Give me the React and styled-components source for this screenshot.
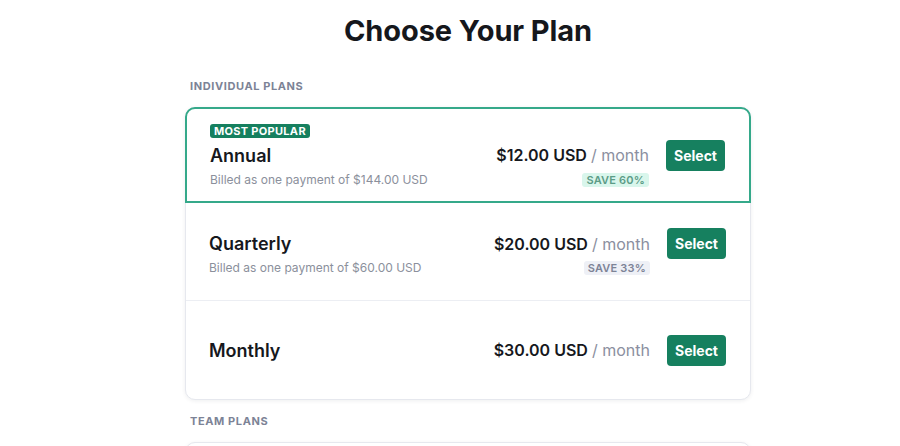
import styled, { createGlobalStyle } from "styled-components";

const GlobalStyle = createGlobalStyle`
  html, body {
    margin: 0;
    padding: 0;
    background: #ffffff;
    font-family: Inter, "Noto Sans", "Liberation Sans", sans-serif;
    color: #16181d;
  }
  * {
    box-sizing: border-box;
  }
`;

const StyledPage = styled.div`
  padding: 14px 0 40px 36px;
  display: flex;
  flex-direction: column;
  align-items: center;
`;

const StyledContent = styled.main`
  width: 566px;
  display: flex;
  flex-direction: column;
`;

const StyledTitle = styled.h1`
  margin: 0 0 31px;
  font-size: 29px;
  line-height: 34px;
  font-weight: 700;
  text-align: center;
  letter-spacing: -0.1px;
  color: #15171c;
`;

const StyledSectionLabel = styled.h2`
  margin: 0 0 14px 5px;
  font-size: 11px;
  line-height: 14px;
  font-weight: 700;
  letter-spacing: 0.6px;
  text-transform: uppercase;
  color: #7c8396;
`;

const StyledCard = styled.section`
  border: 1px solid #e6e8ee;
  border-radius: 10px;
  background: #ffffff;
  box-shadow: 0 1px 4px rgba(20, 24, 40, 0.07);
  margin-bottom: 14px;
`;

const StyledRow = styled.div`
  height: ${(p) => (p.$highlighted ? "96px" : "98px")};
  margin: ${(p) => (p.$highlighted ? "-1px -1px 0" : "0")};
  padding: 0 24px 0 ${(p) => (p.$highlighted ? "23px" : "23px")};
  display: flex;
  flex-direction: column;
  justify-content: center;
  border: ${(p) => (p.$highlighted ? "2px solid #35a98a" : "none")};
  border-bottom: ${(p) =>
    p.$highlighted ? "2px solid #35a98a" : p.$last ? "none" : "1px solid #eceef3"};
  border-radius: ${(p) => (p.$highlighted ? "10px 10px 0 0" : "0")};
`;

const StyledPopular = styled.span`
  align-self: flex-start;
  margin-bottom: 2px;
  padding: 0 4px;
  height: 14px;
  line-height: 14px;
  font-size: 11px;
  font-weight: 700;
  letter-spacing: 0.3px;
  color: #ffffff;
  background: #16805f;
  border-radius: 3px;
`;

const StyledLine = styled.div`
  display: flex;
  align-items: center;
  justify-content: space-between;
  min-height: ${(p) => (p.$main ? "31px" : "14px")};
  margin-top: ${(p) => (p.$main ? "0" : "2px")};
`;

const StyledPlanName = styled.span`
  font-size: 18px;
  font-weight: 600;
  color: #16181d;
`;

const StyledBilled = styled.span`
  font-size: 12px;
  line-height: 14px;
  color: #8b909c;
`;

const StyledPriceGroup = styled.div`
  display: flex;
  align-items: center;
  gap: 17px;
`;

const StyledPrice = styled.span`
  font-size: 16px;
  font-weight: 600;
  color: #16181d;

  span {
    font-weight: 400;
    color: #8b8fa0;
  }
`;

const StyledButton = styled.button`
  height: 31px;
  padding: 0 8px;
  border: none;
  border-radius: 4px;
  background: #16805f;
  color: #ffffff;
  font-family: inherit;
  font-size: 14px;
  font-weight: 700;
  cursor: pointer;
`;

const StyledSave = styled.span`
  margin-right: 76px;
  height: 14px;
  line-height: 14px;
  padding: 0 4px;
  font-size: 11px;
  font-weight: 600;
  letter-spacing: 0.2px;
  border-radius: 3px;
  background: ${(p) => (p.$best ? "#d9f6ec" : "#eef0f6")};
  color: ${(p) => (p.$best ? "#5c9c87" : "#7d8396")};
`;

const individualPlans = [
  {
    name: "Annual",
    price: "$12.00 USD",
    billed: "Billed as one payment of $144.00 USD",
    save: "SAVE 60%",
    popular: true,
  },
  {
    name: "Quarterly",
    price: "$20.00 USD",
    billed: "Billed as one payment of $60.00 USD",
    save: "SAVE 33%",
  },
  { name: "Monthly", price: "$30.00 USD" },
];

const teamPlans = [
  {
    name: "Team Annual",
    price: "$10.00 USD",
    billed: "Billed as one payment of $120.00 USD per seat",
    save: "SAVE 58%",
  },
  { name: "Team Monthly", price: "$24.00 USD" },
];

const PlanRow = ({ plan, last }) => (
  <StyledRow $highlighted={plan.popular} $last={last}>
    {plan.popular && <StyledPopular>MOST POPULAR</StyledPopular>}
    <StyledLine $main>
      <StyledPlanName>{plan.name}</StyledPlanName>
      <StyledPriceGroup>
        <StyledPrice>
          {plan.price} <span>/ month</span>
        </StyledPrice>
        <StyledButton>Select</StyledButton>
      </StyledPriceGroup>
    </StyledLine>
    {plan.billed && (
      <StyledLine>
        <StyledBilled>{plan.billed}</StyledBilled>
        <StyledSave $best={plan.popular}>{plan.save}</StyledSave>
      </StyledLine>
    )}
  </StyledRow>
);

const App = () => (
  <>
    <GlobalStyle />
    <StyledPage>
      <StyledContent>
        <StyledTitle>Choose Your Plan</StyledTitle>

        <StyledSectionLabel>Individual Plans</StyledSectionLabel>
        <StyledCard>
          {individualPlans.map((plan, i) => (
            <PlanRow
              key={plan.name}
              plan={plan}
              last={i === individualPlans.length - 1}
            />
          ))}
        </StyledCard>

        <StyledSectionLabel>Team Plans</StyledSectionLabel>
        <StyledCard>
          {teamPlans.map((plan, i) => (
            <PlanRow key={plan.name} plan={plan} last={i === teamPlans.length - 1} />
          ))}
        </StyledCard>
      </StyledContent>
    </StyledPage>
  </>
);

export default App;
